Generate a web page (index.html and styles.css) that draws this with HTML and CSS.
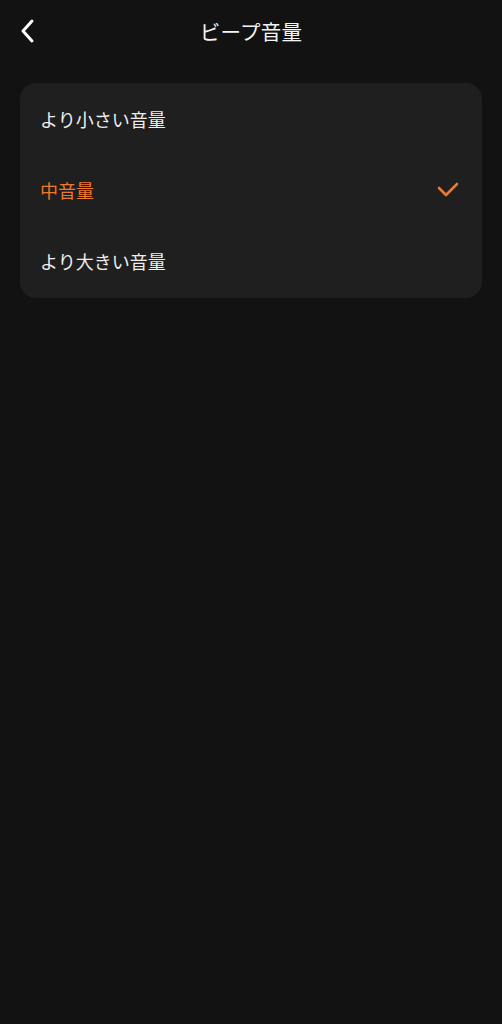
FILE: index.html
```html
<!DOCTYPE html>
<html lang="ja">
<head>
<meta charset="utf-8">
<link rel="stylesheet" href="styles.css">
</head>
<body>
<div class="page">
  <header class="topbar">
    <span class="back">
      <svg width="24" height="30" viewBox="0 0 24 30"><path d="M12 5 L3 15 L12 25" fill="none" stroke="#fff" stroke-width="3" stroke-linecap="round" stroke-linejoin="round"/></svg>
    </span>
    <h1 class="title">ビープ音量</h1>
  </header>
  <div class="card">
    <div class="row"><span class="label">より小さい音量</span></div>
    <div class="row selected"><span class="label">中音量</span>
      <svg class="check" width="24" height="18" viewBox="0 0 24 18"><path d="M3 7 L10 14 L21 3" fill="none" stroke="#ec7a2c" stroke-width="2.6" stroke-linecap="round" stroke-linejoin="round"/></svg>
    </div>
    <div class="row"><span class="label">より大きい音量</span></div>
  </div>
</div>
</body>
</html>
```
FILE: styles.css
```css
html, body {
  margin: 0;
  padding: 0;
  background: #121212;
}
body {
  font-family: "Noto Sans CJK JP", "Noto Sans", sans-serif;
  color: #f2f2f2;
  width: 502px;
  height: 1024px;
}
.page {
  padding: 0 20px;
}
.topbar {
  position: relative;
  height: 64px;
  display: flex;
  align-items: center;
  justify-content: center;
  padding-bottom: 1px;
  box-sizing: border-box;
}
.back {
  position: absolute;
  left: 0;
  top: 16px;
  display: flex;
}
.title {
  margin: 0 0 2px 0;
  font-size: 20.5px;
  font-weight: 400;
  color: #f4f4f4;
  letter-spacing: 0.2px;
}
.card {
  margin-top: 19px;
  background: #1f1f1f;
  border-radius: 16px;
  padding: 0 0 2px 0;
}
.row {
  height: 71px;
  display: flex;
  align-items: center;
  justify-content: space-between;
  padding: 0 22px 0 20px;
}
.label {
  font-size: 18px;
  line-height: 24px;
  color: #eeeeee;
}
.selected .label {
  color: #ec7a2c;
}
.check {
  display: block;
}
```
